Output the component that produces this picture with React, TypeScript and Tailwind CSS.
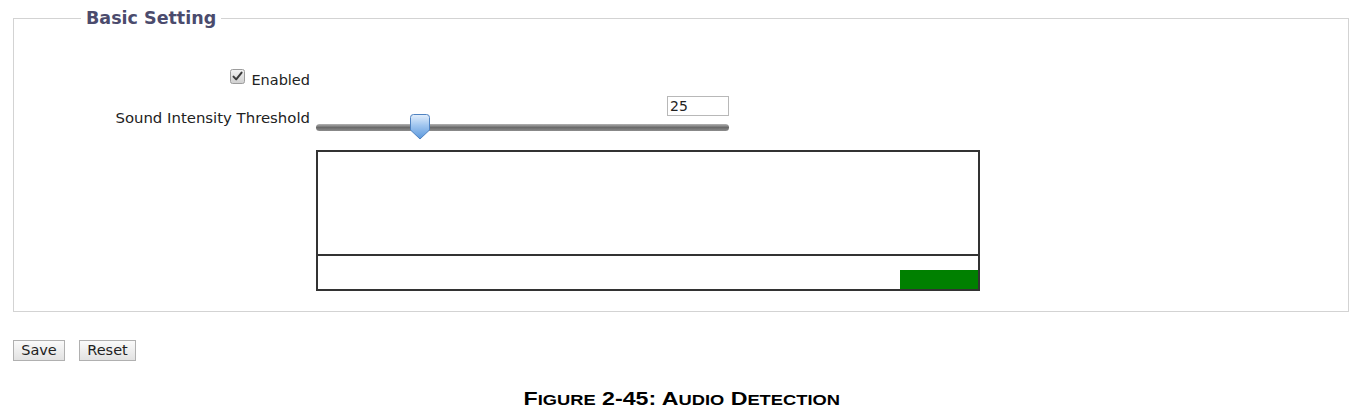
import React from 'react';

const ui = { fontFamily: '"DejaVu Sans", Verdana, sans-serif' };

const Checkbox: React.FC = () => (
  <svg width="15" height="15" viewBox="0 0 15 15" className="mb-[8px] mr-[6px] shrink-0">
    <defs>
      <linearGradient id="cb" x1="0" y1="0" x2="0" y2="1">
        <stop offset="0" stopColor="#f2f2f2" />
        <stop offset="1" stopColor="#cfcfcf" />
      </linearGradient>
    </defs>
    <rect x="0.5" y="0.5" width="14" height="14" rx="2" fill="url(#cb)" stroke="#9c9c9c" />
    <path d="M3.5 7.6 L6.2 10.4 L11.6 3.6" fill="none" stroke="#3a3a3a" strokeWidth="2" strokeLinecap="round" strokeLinejoin="round" />
  </svg>
);

const Handle: React.FC = () => (
  <svg width="20" height="26" viewBox="0 0 20 26" className="absolute left-[94px] top-[-2px]">
    <defs>
      <linearGradient id="hd" x1="0" y1="0" x2="0" y2="1">
        <stop offset="0" stopColor="#e4effc" />
        <stop offset="0.45" stopColor="#9fc5ef" />
        <stop offset="1" stopColor="#5a97dc" />
      </linearGradient>
    </defs>
    <path d="M3.5 0.5 H16.5 Q19.5 0.5 19.5 3.5 V16 L10 25 L0.5 16 V3.5 Q0.5 0.5 3.5 0.5 Z" fill="url(#hd)" stroke="#4f82c0" />
  </svg>
);

export default function App() {
  return (
    <div className="w-full bg-white pt-[8px]" style={ui}>
      {/* Settings group */}
      <fieldset className="ml-[13px] mr-[15px] border border-[#d3d3d3] pb-[20px]">
        <legend className="ml-[67px] px-[5px] text-[17.5px] leading-[20px] font-bold text-[#4b4b6d]">
          Basic Setting
        </legend>

        <div className="grid grid-cols-[296px_1fr] gap-x-[6px] pt-[41px]">
          <div className="flex h-[22px] items-center justify-end text-[14.5px] leading-[22px] text-[#222]">
            <Checkbox />
            <span>Enabled</span>
          </div>
          <div />

          <div className="mt-[5px] flex items-center justify-end text-[14.9px] leading-[20px] text-[#222]">
            Sound Intensity Threshold
          </div>
          <div className="mt-[5px] flex w-[413px] flex-col">
            <input
              type="text"
              defaultValue="25"
              className="h-[20px] w-[62px] self-end border border-[#b8b8b8] px-[2px] text-[14px] leading-[18px] text-[#222] outline-none"
              style={ui}
            />
            <div className="relative h-[23px]">
              <div className="mt-[8px] h-[7px] w-full rounded-full bg-linear-to-b from-[#b4b4b4] via-[#6a6a6a] to-[#8e8e8e]" />
              <Handle />
            </div>
          </div>

          <div />
          <div className="mt-[11px] flex h-[141px] w-[664px] flex-col border-2 border-[#333]">
            <div className="h-[104px] border-b-2 border-[#333]" />
            <div className="flex flex-1 items-end justify-end">
              <div className="h-[19px] w-[78px] bg-[#008000]" />
            </div>
          </div>
        </div>
      </fieldset>

      {/* Buttons */}
      <div className="mt-[28px] ml-[13px] flex gap-[14px]">
        <button className="h-[21px] w-[52px] border border-[#b0b0b0] bg-linear-to-b from-[#fafafa] to-[#e2e2e2] text-[14.5px] leading-[19px] text-[#222]" style={ui}>
          Save
        </button>
        <button className="h-[21px] w-[57px] border border-[#b0b0b0] bg-linear-to-b from-[#fafafa] to-[#e2e2e2] text-[14.5px] leading-[19px] text-[#222]" style={ui}>
          Reset
        </button>
      </div>

      {/* Caption */}
      <div className="mt-[27px] flex justify-center">
        <p
          className="inline-block scale-x-[1.22] text-[19px] leading-[22px] font-bold text-black"
          style={{ fontFamily: '"Liberation Sans", Arial, sans-serif' }}
        >
          F<span className="text-[15px]">IGURE</span> 2-45: A<span className="text-[15px]">UDIO</span> D
          <span className="text-[15px]">ETECTION</span>
        </p>
      </div>
    </div>
  );
}
